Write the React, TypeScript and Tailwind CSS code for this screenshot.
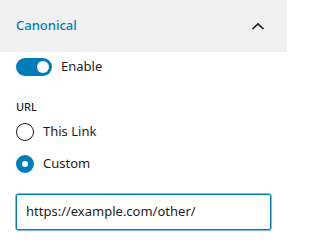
import React, { useState } from "react";

export default function App() {
  const [enabled] = useState(true);
  const [choice, setChoice] = useState("custom");
  return (
    <div className="w-[287px] h-[247px] bg-white text-[#1e1e1e] text-[13px]" style={{ fontFamily: '"Noto Sans", sans-serif' }}>
      <div className="h-[52px] bg-[#f0f0f0] flex items-center justify-between pl-4 pr-[22px]">
        <span className="text-[#007cba] font-medium text-[13px]">Canonical</span>
        <svg width="14" height="8" viewBox="0 0 14 8" className="text-[#1e1e1e]">
          <path d="M1.5 7 L7 1.8 L12.5 7" fill="none" stroke="currentColor" strokeWidth="1.6" />
        </svg>
      </div>
      <div className="px-4">
        <div className="flex items-center gap-[9px] mt-[6px] h-[18px]">
          <div className={`relative w-[36px] h-[18px] rounded-full ${enabled ? "bg-[#007cba]" : "bg-white border border-[#1e1e1e]"}`}>
            <div className="absolute top-[3px] right-[3px] w-[12px] h-[12px] rounded-full bg-white" />
          </div>
          <span>Enable</span>
        </div>
        <div className="mt-[25px] text-[11px] font-medium uppercase leading-none">URL</div>
        <div className="mt-[11px] flex flex-col gap-[14px]">
          {[
            { id: "this", label: "This Link" },
            { id: "custom", label: "Custom" },
          ].map((o) => (
            <label key={o.id} className="flex items-center gap-[9px] h-[18px] cursor-pointer" onClick={() => setChoice(o.id)}>
              {choice === o.id ? (
                <span className="w-[18px] h-[18px] rounded-full border-[6px] border-[#007cba] bg-white box-border" />
              ) : (
                <span className="w-[18px] h-[18px] rounded-full border border-[#1e1e1e] bg-white box-border" />
              )}
              <span>{o.label}</span>
            </label>
          ))}
        </div>
        <div className="mt-[21px] h-[36px] rounded-[2px] border-[1.5px] border-[#007cba] shadow-[0_0_0_0.5px_#007cba] flex items-center px-[9px]">
          <span className="text-[13px]">https://example.com/other/</span>
        </div>
      </div>
    </div>
  );
}
